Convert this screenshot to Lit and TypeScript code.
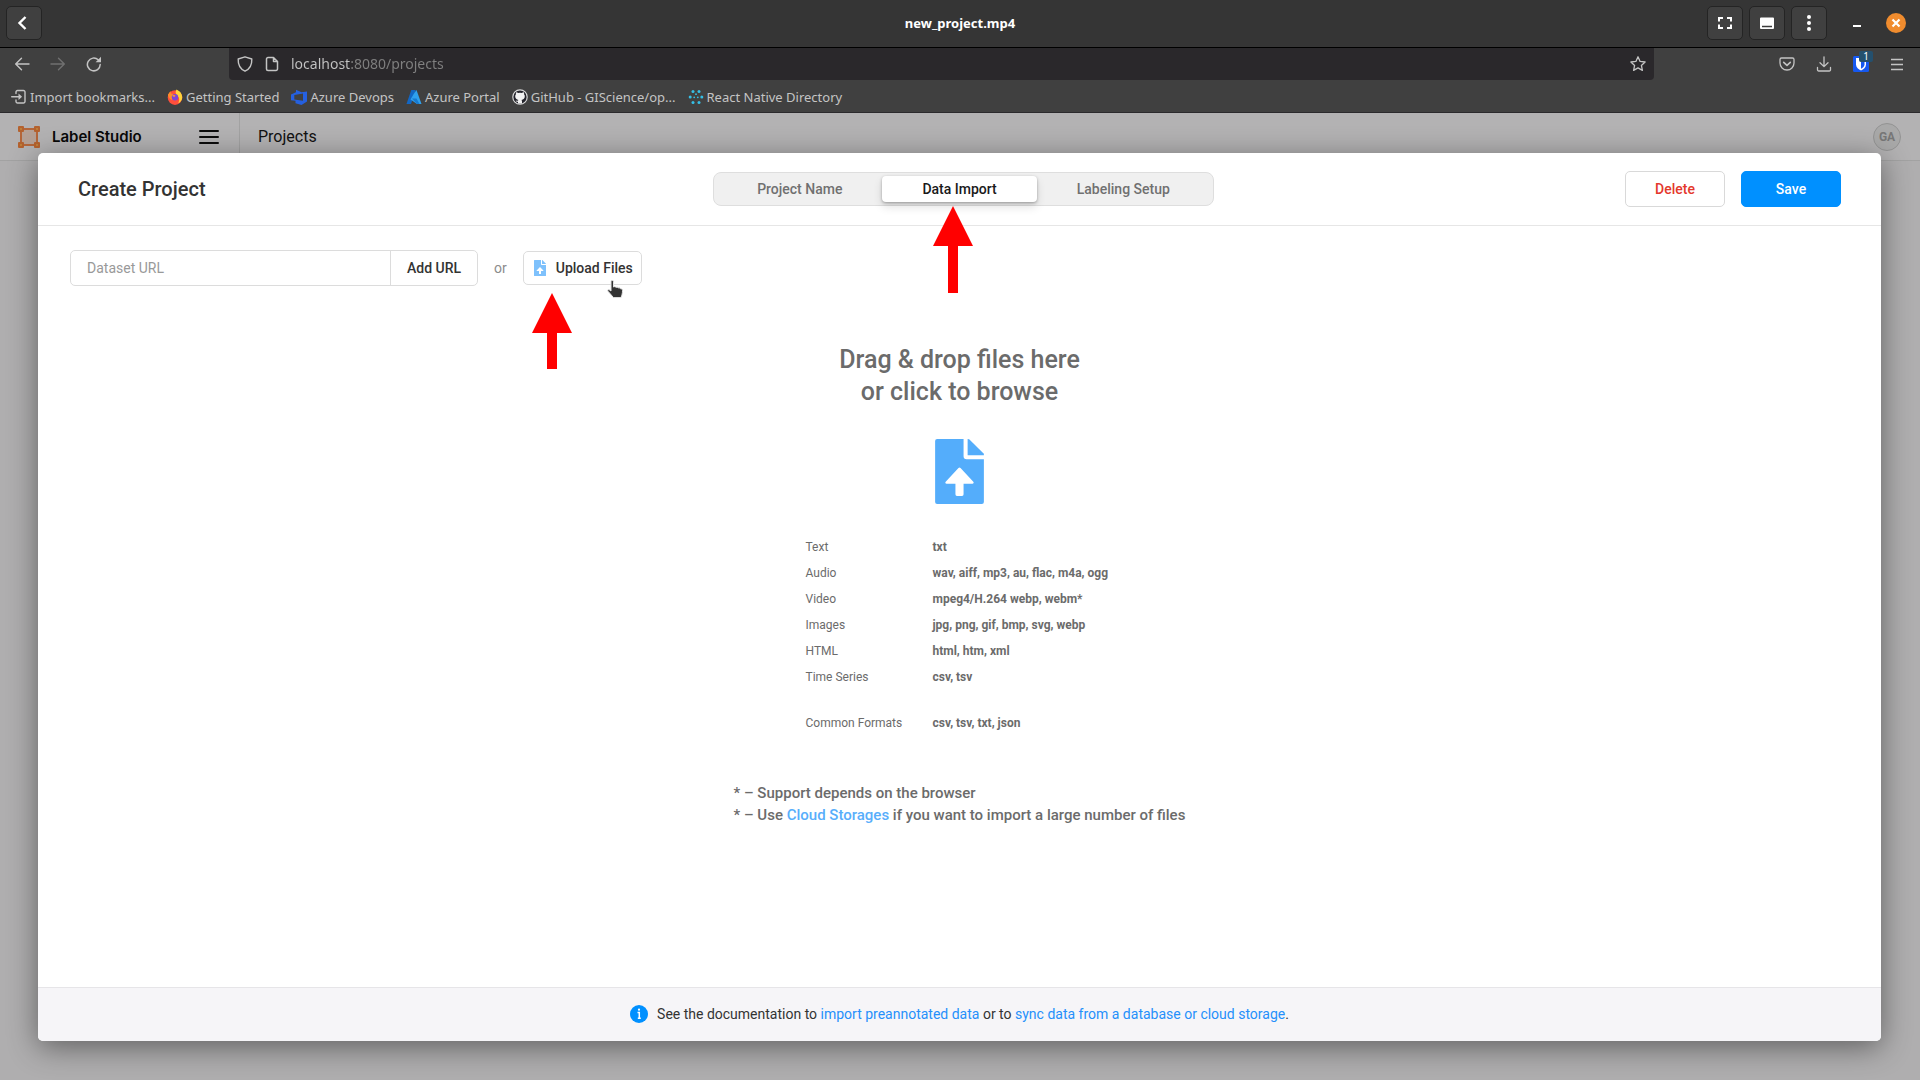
import { LitElement, html, css, svg } from "lit";
import { customElement } from "lit/decorators.js";

const formats: [string, string][] = [
  ["Text", "txt"],
  ["Audio", "wav, aiff, mp3, au, flac, m4a, ogg"],
  ["Video", "mpeg4/H.264 webp, webm*"],
  ["Images", "jpg, png, gif, bmp, svg, webp"],
  ["HTML", "html, htm, xml"],
  ["Time Series", "csv, tsv"],
  ["Common Formats", "csv, tsv, txt, json"],
];

const icon = (w: number, h: number, body: unknown, cls = "") =>
  html`<svg class="icon ${cls}" width=${w} height=${h} viewBox="0 0 ${w} ${h}" aria-hidden="true">${body}</svg>`;

const backChevron = icon(18, 18, svg`<path d="M10.500 3 4.500 9l6 6" fill="none" stroke="#fff" stroke-width="2.400"/>`);
const arrowLeft = icon(16, 16, svg`<path d="M15 8H2M7.500 2.200 1.700 8l5.800 5.800" fill="none" stroke="currentColor" stroke-width="1.400" stroke-linecap="round" stroke-linejoin="round"/>`);
const arrowRight = icon(16, 16, svg`<path d="M1 8h13M8.500 2.200 14.300 8l-5.800 5.800" fill="none" stroke="currentColor" stroke-width="1.400" stroke-linecap="round" stroke-linejoin="round"/>`);
const reload = icon(16, 16, svg`<path d="M14.200 8.600A6.400 6.400 0 1 1 12.200 3.800" fill="none" stroke="currentColor" stroke-width="1.500" stroke-linecap="round"/><path d="M15 .8v5.400H9.600z" fill="currentColor"/>`);
const shield = icon(16, 18, svg`<path d="M8 1.800 14.800 4c.3 6-2 10-6.800 12.200C3.200 14 .9 10 1.200 4z" fill="none" stroke="currentColor" stroke-width="1.400" stroke-linejoin="round"/>`);
const page = icon(14, 16, svg`<path d="M3 1.500h5.500L12.500 5.500V13a1.500 1.500 0 0 1-1.500 1.500H3A1.500 1.500 0 0 1 1.500 13V3A1.500 1.500 0 0 1 3 1.500zM8.500 1.500v4h4" fill="none" stroke="currentColor" stroke-width="1.500" stroke-linejoin="round"/>`);
const star = icon(18, 18, svg`<path d="m9 1.800 2.100 4.600 5 .6-3.700 3.400 1 5L9 12.900l-4.400 2.500 1-5L1.900 7l5-.6z" fill="none" stroke="currentColor" stroke-width="1.300" stroke-linejoin="round"/>`);
const pocket = icon(16, 16, svg`<path d="M2.500 2h11A1.500 1.500 0 0 1 15 3.500V7A7 7 0 0 1 1 7V3.500A1.500 1.500 0 0 1 2.500 2z" fill="none" stroke="currentColor" stroke-width="1.300"/><path d="M4.700 6.300 8 9.400l3.300-3.100" fill="none" stroke="currentColor" stroke-width="1.600" stroke-linecap="round" stroke-linejoin="round"/>`);
const download = icon(16, 16, svg`<path d="M8 .8v9.600M4 6.700l4 3.900 4-3.900M1.500 11.500v2A1.300 1.300 0 0 0 2.800 15h10.400a1.300 1.300 0 0 0 1.300-1.500v-2" fill="none" stroke="currentColor" stroke-width="1.300" stroke-linecap="round" stroke-linejoin="round"/>`);
const bitwarden = icon(16, 16, svg`<rect width="16" height="16" rx="1.500" fill="#1558f0"/><path d="M3 2h10v6.500c0 3-2.600 5-5 6-2.400-1-5-3-5-6z" fill="#fff"/><path d="M8 3.500h3.500v5c0 1.800-1.700 3.300-3.500 4.200z" fill="#1558f0"/>`);
const menuThin = icon(14, 14, svg`<path d="M1 2.500h12M1 7.500h12M1 12.500h12" stroke="currentColor" stroke-width="1.300"/>`);
const fullscreen = icon(18, 18, svg`<path d="M7 4H3v3.500M11 4h4v3.500M7 14H3v-3.500M11 14h4v-3.500" fill="none" stroke="#fff" stroke-width="2"/>`);
const panel = icon(16, 16, svg`<path d="M2 2.500h12a1 1 0 0 1 1 1v9.500a1 1 0 0 1-1 1H2a1 1 0 0 1-1-1V3.500a1 1 0 0 1 1-1z" fill="#fff"/><path d="M3 11.500h10" stroke="#3c3c3c" stroke-width="1.500"/>`);
const dots = icon(16, 18, svg`<g fill="#fff"><circle cx="8" cy="3" r="2"/><circle cx="8" cy="9" r="2"/><circle cx="8" cy="15" r="2"/></g>`);
const closeIcon = icon(20, 20, svg`<circle cx="10" cy="10" r="10" fill="#f08c2e"/><path d="m6.500 6.500 7 7m0-7-7 7" stroke="#fff" stroke-width="2.200"/>`);
const minimize = icon(10, 20, svg`<path d="M1 13h8" stroke="#fff" stroke-width="2"/>`);

const importIcon = icon(16, 16, svg`<path d="M5 4.500V3A1.500 1.500 0 0 1 6.500 1.500h6A1.500 1.500 0 0 1 14 3v9.500a1.500 1.500 0 0 1-1.500 1.500h-6A1.500 1.500 0 0 1 5 12.500V11M.7 7.800h8.500" fill="none" stroke="currentColor" stroke-width="1.400" stroke-linecap="round"/><path d="M7.500 4.500v6.600l3.600-3.300z" fill="currentColor"/>`);
const firefox = icon(16, 16, svg`<circle cx="8" cy="8.600" r="7.300" fill="#ff4f3c"/><path d="M9.500.5c3.500 1.500 6 4.500 5.700 8.500-.3 2.500-2 4.500-4 5.200 1.500-2.500 1.500-6-1-7.500C8.500 5 8.200 2.500 9.500.5z" fill="#ffd43a"/><path d="M1 5.500 3.500 2 4 4.500l3 .5-2 2 .5 4C3 10.500.8 8 1 5.500z" fill="#ff8a2a"/><circle cx="8" cy="8.300" r="3.200" fill="#8045d8"/><path d="M5 6.500c1.500-1 3-.5 3.500.5L7 8z" fill="#ff9a2e"/>`);
const devops = icon(16, 16, svg`<path fill-rule="evenodd" d="M0 5.500 5 3.300V.8l5.500 2.400L16 2.500v10L10.500 16l-6-1.800v-2.400L0 11.300zM3.300 6v4.600l8.700 1.200V4.400z" fill="#2560e0"/>`);
const azure = icon(16, 16, svg`<path d="M5.300 1h4.400L5 15H.5z" fill="#1267c4"/><path d="M8.300 4 4.500 10.500 11 15h4.500L10.500 1z" fill="#2ea0ee"/><path d="M6 9.500h4.500l3 5.500H11z" fill="#1779cf"/>`);
const github = icon(16, 16, svg`<circle cx="8" cy="8" r="7.200" fill="#24242c" stroke="#d8d8d8" stroke-width="1.200"/><path d="M6 14.600v-1.900c-1.300.2-1.900-.5-2.300-1.300 1 0 1.500.7 2.300.4 0-.4.200-.7.500-.9-2-.3-3.300-1.300-3.300-3.600 0-.9.300-1.500.8-2-.2-.6-.2-1.300.1-2 .8 0 1.500.4 2.100.8a6 6 0 0 1 3.600 0c.6-.4 1.300-.8 2.100-.8.300.7.300 1.400.1 2 .5.500.8 1.100.8 2 0 2.300-1.300 3.300-3.300 3.600.4.400.5.900.5 1.500v2.200z" fill="#f2f2f2"/>`);
const reactDir = icon(16, 16, svg`<g fill="#35bfe6"><circle cx="5" cy="2.500" r="1.500"/><circle cx="11" cy="2.500" r="1.500"/><circle cx="2.200" cy="8" r="1.500"/><circle cx="13.800" cy="8" r="1.500"/><circle cx="5" cy="13.500" r="1.500"/><circle cx="11" cy="13.500" r="1.500"/><circle cx="6.200" cy="8.300" r=".9"/><circle cx="9.800" cy="8.300" r=".9"/><circle cx="8" cy="5.200" r=".9"/></g>`);

const logo = icon(24, 24, svg`<rect x="4" y="4" width="16" height="16" fill="#b5a196"/><path d="M5 4h14M5 20h14M4 5v14M20 5v14" stroke="#b4663a" stroke-width="2"/><g fill="#b4622f"><rect x="1" y="1" width="6" height="6" rx="1"/><rect x="17" y="1" width="6" height="6" rx="1"/><rect x="1" y="17" width="6" height="6" rx="1"/><rect x="17" y="17" width="6" height="6" rx="1"/></g><g fill="#c08a3c"><circle cx="4" cy="4" r="1"/><circle cx="20" cy="4" r="1"/><circle cx="4" cy="20" r="1"/><circle cx="20" cy="20" r="1"/></g>`);
const menuBold = icon(20, 16, svg`<path d="M1 2h18M1 8h18M1 14h18" stroke="#0c0c0c" stroke-width="2" stroke-linecap="round"/>`);
const info = icon(18, 18, svg`<circle cx="9" cy="9" r="9" fill="#0090ff"/><path d="M7.500 7.500H9.300V13M7.800 13.200h3" fill="none" stroke="#fff" stroke-width="1.500"/><circle cx="9" cy="4.700" r="1.100" fill="#fff"/>`);

const fileUpload = (cls: string) => html`<svg class="icon ${cls}" viewBox="0 0 48 64" aria-hidden="true">
  <path d="M2 0h26v17a3 3 0 0 0 3 3h17v42a2 2 0 0 1-2 2H2a2 2 0 0 1-2-2V2a2 2 0 0 1 2-2z" fill="#54adfb"/>
  <path d="M32 0 33.500.3 48 14.500V16H32z" fill="#54adfb"/>
  <path d="M23 28.500a1.500 1.500 0 0 1 2 0L37.600 42c.8.900.3 2-.9 2H28v10.500a1.500 1.500 0 0 1-1.500 1.500h-5a1.500 1.500 0 0 1-1.500-1.500V44h-8.700c-1.200 0-1.700-1.100-.9-2z" fill="#fff"/>
</svg>`;

@customElement("app-root")
export class AppRoot extends LitElement {
  static styles = css`
    :host {
      display: flex;
      flex-direction: column;
      min-height: 100vh;
      background: #afaeaf;
      font-family: Roboto, "Liberation Sans", sans-serif;
      font-size: 14px;
      color: #333;
    }
    *, *::before { box-sizing: border-box; }
    button { font: inherit; color: inherit; border: 0; background: none; padding: 0; margin: 0; display: inline-flex; align-items: center; justify-content: center; cursor: pointer; }
    a { color: inherit; text-decoration: none; }
    .icon { display: block; flex: none; }
    h1, h2, p { margin: 0; }

    .titlebar { display: grid; grid-template-columns: 1fr auto 1fr; align-items: center; height: 48px; padding: 0 14px 2px; background: #353535; border-bottom: 1px solid #000; }
    .titlebar-back { display: flex; margin-left: -8px; }
    .titlebar-name { font: 700 13px/18px "Noto Sans", "Open Sans", sans-serif; color: #fff; }
    .titlebar-actions { display: flex; justify-content: flex-end; align-items: center; }
    .frame-button { width: 36px; height: 34px; background: #404040; border: 1px solid #242424; border-radius: 5px; }
    .titlebar-tools { display: flex; gap: 6px; margin-right: 25px; }
    .titlebar-window { display: flex; gap: 24px; }

    .chrome { background: #404040; color: #c4c4c4; font-family: "Noto Sans", sans-serif; border-bottom: 1px solid #2b2a2d; }
    .toolbar { display: flex; align-items: center; height: 32px; padding: 0 16px 0 14px; }
    .nav { display: flex; gap: 20px; width: 215px; flex: none; }
    .forward { color: #707070; }
    .address { display: flex; align-items: center; flex: 0 1 1425px; height: 32px; padding: 0 7px 0 8px; background: #2a282b; border-radius: 0 0 4px 4px; gap: 12px; }
    .address-input { flex: 1; min-width: 0; border: 0; padding: 0; margin: 0; outline: none; font: inherit; font-size: 14px; line-height: 20px; color: transparent; background: linear-gradient(90deg, #c4c4c4 59px, #808080 59px); background-clip: text; -webkit-background-clip: text; }
    .browser-actions { display: flex; align-items: center; gap: 21px; margin-left: auto; }
    .extension { position: relative; }
    .badge { position: absolute; left: 6px; top: -5px; width: 14px; height: 11px; border-radius: 2px; background: #24506e; color: #fff; font-size: 10px; line-height: 11px; text-align: center; }
    .bookmarks { display: flex; align-items: center; gap: 12px; height: 32px; padding: 2px 11px 0; }
    .bookmark { display: flex; align-items: center; gap: 3px; font-size: 13px; line-height: 20px; white-space: nowrap; }

    .app-header { display: flex; align-items: center; height: 48px; padding: 0 19px 0 17px; background: #b3b2b3; border-bottom: 1px solid #a2a2a2; color: #111; }
    .brand { display: flex; align-items: center; align-self: stretch; gap: 11px; width: 223px; padding-right: 20px; border-right: 1px solid #a2a2a2; }
    .brand-name { flex: 1; font: 600 15px/20px Inter, Roboto, sans-serif; color: #080808; }
    .crumb { margin-left: 18px; font-size: 16px; line-height: 20px; }
    .avatar { margin-left: auto; width: 28px; height: 28px; border-radius: 50%; border: 1px solid #939393; background: #a9a9a9; color: #777; font-size: 12px; font-weight: 700; }

    .modal { position: relative; flex: 1; display: flex; flex-direction: column; margin: -8px 39px 39px 38px; background: #fff; border-radius: 5px; box-shadow: 0 6px 30px rgba(0, 0, 0, 0.45); overflow: hidden; }
    .modal-header { display: grid; grid-template-columns: 1fr auto 1fr; align-items: center; height: 73px; padding: 0 40px; border-bottom: 1px solid #e6e6e6; }
    .modal-title { font-size: 20px; line-height: 24px; font-weight: 500; color: #333; }
    .tabs { display: flex; margin-left: 8px; padding: 3px; height: 34px; border: 1px solid #dedede; border-radius: 8px; background: #f0f0f0; }
    .tab { height: 26px; padding: 0 40px; border-radius: 4px; font-size: 14px; font-weight: 500; color: #707070; }
    .tab-active { background: #fff; color: #1a1a1a; box-shadow: 0 1px 3px rgba(0, 0, 0, 0.3), 0 5px 10px rgba(0, 0, 0, 0.12); }
    .actions { display: flex; justify-content: flex-end; gap: 16px; }
    .action { width: 100px; height: 36px; border-radius: 5px; border: 1px solid #d9d9d9; font-weight: 500; }
    .delete { color: #e4382c; }
    .save { background: #0090ff; border-color: #0090ff; color: #fff; }

    .modal-body { flex: 1; display: flex; flex-direction: column; padding: 24px 32px; }
    .source { display: flex; align-items: center; gap: 16px; color: #8c8c8c; font-size: 14px; }
    .url-form { display: flex; height: 36px; border: 1px solid #dcdcdc; border-radius: 5px; }
    .url-input { width: 320px; border: 0; border-right: 1px solid #dcdcdc; padding: 0 16px; font: inherit; background: none; outline: none; }
    .url-input::placeholder { color: #999; opacity: 1; }
    .add-url { width: 86px; font-weight: 500; color: #333; }
    .upload { height: 34px; gap: 10px; padding: 0 8px 0 10px; border: 1px solid #dcdcdc; border-radius: 5px; font-weight: 500; color: #333; }
    .file-small { width: 12px; height: 16px; opacity: 0.75; }
    .file-large { width: 49px; height: 65px; }

    .drop { display: flex; flex-direction: column; align-items: center; padding-top: 58px; color: #6b6b6b; }
    .drop-title { font-size: 25px; line-height: 32px; font-weight: 500; text-align: center; margin-bottom: 31px; }
    .formats { margin-top: 30px; width: 308px; border-collapse: collapse; font-size: 12px; line-height: 16px; }
    .formats th, .formats td { padding: 5px 0; text-align: left; vertical-align: top; }
    .formats th { width: 127px; font-weight: 400; }
    .formats td { font-weight: 700; }
    .formats tr:last-child > * { padding-top: 25px; }
    .notes { margin-top: 46px; font-size: 15px; line-height: 22px; font-weight: 500; }
    .link-soft { color: #58aefb; }

    .modal-footer { display: flex; align-items: center; justify-content: center; gap: 9px; height: 54px; padding-bottom: 1px; background: #f6f5f8; border-top: 1px solid #e6e5e8; font-size: 14px; }
    .link { color: #2590fb; }

    .annotation { position: absolute; display: block; }
    .arrow-tab { left: 895px; top: 53px; }
    .arrow-upload { left: 494px; top: 140px; }
    .cursor { position: absolute; left: 568px; top: 127px; }
  `;

  render() {
    return html`
      <header class="titlebar">
        <div class="titlebar-back"><button class="frame-button" aria-label="Back">${backChevron}</button></div>
        <span class="titlebar-name">new_project.mp4</span>
        <div class="titlebar-actions">
          <div class="titlebar-tools">
            <button class="frame-button" aria-label="Fullscreen">${fullscreen}</button>
            <button class="frame-button" aria-label="Panel">${panel}</button>
            <button class="frame-button" aria-label="Options">${dots}</button>
          </div>
          <div class="titlebar-window">
            <button aria-label="Minimize">${minimize}</button>
            <button aria-label="Close">${closeIcon}</button>
          </div>
        </div>
      </header>
      <div class="chrome">
        <div class="toolbar">
          <div class="nav">
            <button aria-label="Go back">${arrowLeft}</button>
            <button class="forward" aria-label="Go forward">${arrowRight}</button>
            <button aria-label="Reload">${reload}</button>
          </div>
          <div class="address">
            ${shield}${page}
            <input class="address-input" type="text" aria-label="Address" value="localhost:8080/projects" />
            <button aria-label="Bookmark page">${star}</button>
          </div>
          <div class="browser-actions">
            <button aria-label="Pocket">${pocket}</button>
            <button aria-label="Downloads">${download}</button>
            <button class="extension" aria-label="Bitwarden">${bitwarden}<span class="badge">1</span></button>
            <button aria-label="Menu">${menuThin}</button>
          </div>
        </div>
        <nav class="bookmarks">
          <a class="bookmark" href="#">${importIcon}Import bookmarks...</a>
          <a class="bookmark" href="#">${firefox}Getting Started</a>
          <a class="bookmark" href="#">${devops}Azure Devops</a>
          <a class="bookmark" href="#">${azure}Azure Portal</a>
          <a class="bookmark" href="#">${github}GitHub - GIScience/op...</a>
          <a class="bookmark" href="#">${reactDir}React Native Directory</a>
        </nav>
      </div>
      <div class="app-header">
        <div class="brand">${logo}<span class="brand-name">Label Studio</span><button aria-label="Main menu">${menuBold}</button></div>
        <a class="crumb" href="#">Projects</a>
        <button class="avatar">GA</button>
      </div>
      <section class="modal">
        <div class="modal-header">
          <h1 class="modal-title">Create Project</h1>
          <nav class="tabs">
            <button class="tab">Project Name</button>
            <button class="tab tab-active">Data Import</button>
            <button class="tab">Labeling Setup</button>
          </nav>
          <div class="actions">
            <button class="action delete">Delete</button>
            <button class="action save">Save</button>
          </div>
        </div>
        <div class="modal-body">
          <div class="source">
            <form class="url-form">
              <input class="url-input" aria-label="Dataset URL" placeholder="Dataset URL" />
              <button class="add-url" type="button">Add URL</button>
            </form>
            <span>or</span>
            <button class="upload">${fileUpload("file-small")}Upload Files</button>
          </div>
          <div class="drop">
            <h2 class="drop-title">Drag &amp; drop files here<br />or click to browse</h2>
            ${fileUpload("file-large")}
            <table class="formats">
              <tbody>
                ${formats.map(([kind, list]) => html`<tr><th scope="row">${kind}</th><td>${list}</td></tr>`)}
              </tbody>
            </table>
            <div class="notes">
              <p>* – Support depends on the browser</p>
              <p>* – Use <a class="link-soft" href="#">Cloud Storages</a> if you want to import a large number of files</p>
            </div>
          </div>
        </div>
        <footer class="modal-footer">
          ${info}
          <p>See the documentation to <a class="link" href="#">import preannotated data</a> or to <a class="link" href="#">sync data from a database or cloud storage</a>.</p>
        </footer>
        <svg class="annotation arrow-tab" width="40" height="88" viewBox="0 0 40 88" aria-hidden="true"><path d="M20 0 40 40H25v47H15V40H0z" fill="#f00"/></svg>
        <svg class="annotation arrow-upload" width="40" height="76" viewBox="0 0 40 76" aria-hidden="true"><path d="M20 0 40 40H25v36H15V40H0z" fill="#f00"/></svg>
        <svg class="cursor" width="20" height="20" viewBox="0 0 20 20" aria-hidden="true"><path d="M5 1.500c0-1.300 2.500-1.300 2.500 0V7c1-.6 2-.4 2.500.4 1-.5 2-.2 2.300.6 1-.4 2 .1 2.200.8 1.500-.2 2 .7 2 1.800 0 2.800-.5 4.400-1.500 7H7.500L2 11.300c-.9-1.300.5-2.200 1.500-1.400L5 11z" fill="#333" stroke="#e4e4e4"/></svg>
      </section>
    `;
  }
}
